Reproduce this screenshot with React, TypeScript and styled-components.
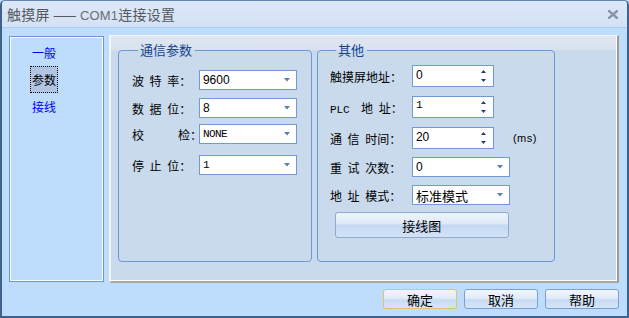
import React from 'react';
import styled, { createGlobalStyle } from 'styled-components';

// Fonte base dos rótulos chineses
const CJK = `"Noto Sans CJK SC", "Liberation Sans", sans-serif`;

const GlobalStyle = createGlobalStyle`
  html, body {
    margin: 0;
    padding: 0;
    background: #bedcfc;
  }
  body {
    font-family: ${CJK};
    font-size: 12px;
    color: #000;
  }
`;

const Window = styled.div`
  width: 629px;
  height: 318px;
  box-sizing: border-box;
  display: flex;
  flex-direction: column;
  background: #bedcfc;
  border: 2px solid #3f618f;
  border-top: 1px solid #6484b0;
  border-radius: 5px 5px 0 0;
  overflow: hidden;
`;

const TitleBar = styled.div`
  height: 26px;
  display: flex;
  align-items: center;
  justify-content: space-between;
  padding: 0 9px 0 5px;
  background: linear-gradient(#dde8f6, #d3e2f5);
  border-bottom: 1px solid #aecbef;
`;

const TitleText = styled.span`
  font-size: 14px;
  color: #555a60;
  letter-spacing: 0.2px;
  span {
    font-family: "Liberation Sans", sans-serif;
    font-size: 13px;
    color: #6a6e75;
  }
`;

const CloseIcon = () => (
  <svg width="10" height="9" viewBox="0 0 10 9">
    <path d="M1 1 L9 8 M9 1 L1 8" stroke="#8696ad" strokeWidth="2.4" strokeLinecap="square" />
  </svg>
);

const Body = styled.div`
  display: flex;
  align-items: flex-start;
  gap: 5px;
  padding: 7px 8px 0 7px;
`;

const Nav = styled.div`
  width: 95px;
  height: 246px;
  margin-top: 1px;
  box-sizing: border-box;
  border: 1px solid #6b96d0;
  box-shadow: inset 0 0 0 1px #fff;
  padding: 2px 0 0 20px;
  display: flex;
  flex-direction: column;
  align-items: flex-start;
`;

const NavItem = styled.div<{ $active?: boolean }>`
  width: 28px;
  height: 27px;
  box-sizing: border-box;
  display: flex;
  align-items: center;
  justify-content: center;
  font-size: 12px;
  color: ${p => (p.$active ? '#000' : '#0000ff')};
  background: ${p => (p.$active ? '#b2c6e4' : 'transparent')};
  border: 1px dotted ${p => (p.$active ? '#000' : 'transparent')};
`;

const Panel = styled.div`
  width: 511px;
  height: 248px;
  box-sizing: border-box;
  background: linear-gradient(#dfe7f1 0, #d9e3ef 13px, #c9daed 15px, #c9daed 100%);
  border-left: 2px solid #f2f5f9;
  border-top: 1px solid #f2f5f9;
  border-right: 2px solid #9c9b96;
  border-bottom: 2px solid #aaa69c;
  box-shadow: inset -1px -1px 0 #fff;
  display: flex;
  gap: 5px;
  padding: 7px 0 0 7px;
`;

const Group = styled.fieldset<{ $width: number; $pad: number }>`
  width: ${p => p.$width}px;
  height: 219px;
  box-sizing: border-box;
  margin: 0;
  padding: 0 0 0 ${p => p.$pad}px;
  border: 1px solid #6c98d3;
  border-radius: 4px;
  display: flex;
  flex-direction: column;
  align-items: flex-start;
`;

const Legend = styled.legend`
  font-size: 13px;
  line-height: 14px;
  color: #15428b;
  padding: 0 3px 0 2px;
  margin-left: 6px;
`;

const Row = styled.div<{ $top: number }>`
  display: flex;
  align-items: center;
  margin-top: ${p => p.$top}px;
`;

const Label = styled.span<{ $width: number }>`
  width: ${p => p.$width}px;
  font-size: 12px;
  white-space: pre;
  word-spacing: 3px;
  color: #000;
  .latin {
    font-family: "Liberation Mono", monospace;
    font-size: 11px;
  }
`;

const Field = styled.div<{ $width: number; $height: number }>`
  width: ${p => p.$width}px;
  height: ${p => p.$height}px;
  box-sizing: border-box;
  background: #fff;
  border: 1px solid #6f9ad3;
  position: relative;
  display: flex;
  align-items: center;
  padding-left: 3px;
`;

const Value = styled.span<{ $font?: 'sans' | 'mono' | 'cjk' }>`
  font-family: ${p =>
    p.$font === 'mono' ? `"Liberation Mono", monospace` : p.$font === 'cjk' ? CJK : `"Liberation Sans", sans-serif`};
  font-size: ${p => (p.$font === 'mono' ? '11px' : p.$font === 'cjk' ? '13px' : '12px')};
  letter-spacing: ${p => (p.$font === 'mono' ? '-0.6px' : '0')};
`;

const SpinValue = styled(Value)`
  align-self: flex-start;
  margin-top: 2px;
`;

const Arrow = styled.svg`
  position: absolute;
  right: 6px;
  top: 50%;
  margin-top: -2px;
`;

const Spin = styled.div`
  position: absolute;
  right: 7px;
  top: 4px;
  bottom: 4px;
  display: flex;
  flex-direction: column;
  justify-content: space-between;
`;

const DropArrow = () => (
  <Arrow width="6" height="4" viewBox="0 0 6 4">
    <path d="M0 0 H6 L3 3.5 Z" fill="#5a7eb3" />
  </Arrow>
);

const SpinArrows = () => (
  <Spin>
    <svg width="5" height="3" viewBox="0 0 5 3">
      <path d="M0 3 H5 L2.5 0 Z" fill="#243f73" />
    </svg>
    <svg width="5" height="3" viewBox="0 0 5 3">
      <path d="M0 0 H5 L2.5 3 Z" fill="#243f73" />
    </svg>
  </Spin>
);

const Unit = styled.span`
  margin-left: 19px;
  font-family: "Liberation Sans", sans-serif;
  font-size: 11px;
  letter-spacing: 0.5px;
`;

const WideButton = styled.div`
  width: 174px;
  height: 26px;
  box-sizing: border-box;
  margin: 7px 0 0 5px;
  border: 1px solid #8eaad0;
  border-radius: 3px;
  background: linear-gradient(#eef4fb 0, #dfeaf7 45%, #c4d8f1 50%, #d3e4f7 100%);
  display: flex;
  align-items: center;
  justify-content: center;
  font-size: 13px;
`;

const Footer = styled.div`
  display: flex;
  justify-content: flex-end;
  gap: 7px;
  padding: 6px 8px 0 0;
`;

const Button = styled.div<{ $default?: boolean }>`
  width: 74px;
  height: 20px;
  box-sizing: border-box;
  border: 1px solid ${p => (p.$default ? '#dcc46c' : '#7e9fcd')};
  border-radius: 3px;
  background: linear-gradient(#f0f6fd 0, #e1ecf9 45%, #c8dbf2 55%, #d6e6f8 100%);
  display: flex;
  align-items: center;
  justify-content: center;
  font-size: 13px;
`;

const Select = ({ value, width, font }: { value: string; width: number; font?: 'sans' | 'mono' | 'cjk' }) => (
  <Field $width={width} $height={20}>
    <Value $font={font}>{value}</Value>
    <DropArrow />
  </Field>
);

const SpinBox = ({ value, font }: { value: string; font?: 'sans' | 'mono' }) => (
  <Field $width={82} $height={22}>
    <SpinValue $font={font}>{value}</SpinValue>
    <SpinArrows />
  </Field>
);

export default function App() {
  return (
    <>
      <GlobalStyle />
      <Window>
        <TitleBar>
          <TitleText>
            触摸屏 —— <span>COM1</span>连接设置
          </TitleText>
          <CloseIcon />
        </TitleBar>
        <Body>
          <Nav>
            <NavItem>一般</NavItem>
            <NavItem $active>参数</NavItem>
            <NavItem>接线</NavItem>
          </Nav>
          <Panel>
            <Group $width={194} $pad={13}>
              <Legend>通信参数</Legend>
              <Row $top={13}>
                <Label $width={67}>波 特 率：</Label>
                <Select value="9600" width={98} />
              </Row>
              <Row $top={8}>
                <Label $width={67}>数 据 位：</Label>
                <Select value="8" width={98} />
              </Row>
              <Row $top={6}>
                <Label $width={67}>{'校      检：'}</Label>
                <Select value="NONE" width={98} font="mono" />
              </Row>
              <Row $top={11}>
                <Label $width={67}>停 止 位：</Label>
                <Select value="1" width={98} font="mono" />
              </Row>
            </Group>
            <Group $width={238} $pad={12}>
              <Legend>其他</Legend>
              <Row $top={8}>
                <Label $width={82}>触摸屏地址：</Label>
                <SpinBox value="0" />
              </Row>
              <Row $top={9}>
                <Label $width={82}>
                  <span className="latin">PLC</span>{'  地 址：'}
                </Label>
                <SpinBox value="1" font="mono" />
              </Row>
              <Row $top={9}>
                <Label $width={82}>通 信 时间：</Label>
                <SpinBox value="20" />
                <Unit>(ms)</Unit>
              </Row>
              <Row $top={8}>
                <Label $width={82}>重 试 次数：</Label>
                <Select value="0" width={98} />
              </Row>
              <Row $top={8}>
                <Label $width={82}>地 址 模式：</Label>
                <Select value="标准模式" width={98} font="cjk" />
              </Row>
              <WideButton>接线图</WideButton>
            </Group>
          </Panel>
        </Body>
        <Footer>
          <Button $default>确定</Button>
          <Button>取消</Button>
          <Button>帮助</Button>
        </Footer>
      </Window>
    </>
  );
}
